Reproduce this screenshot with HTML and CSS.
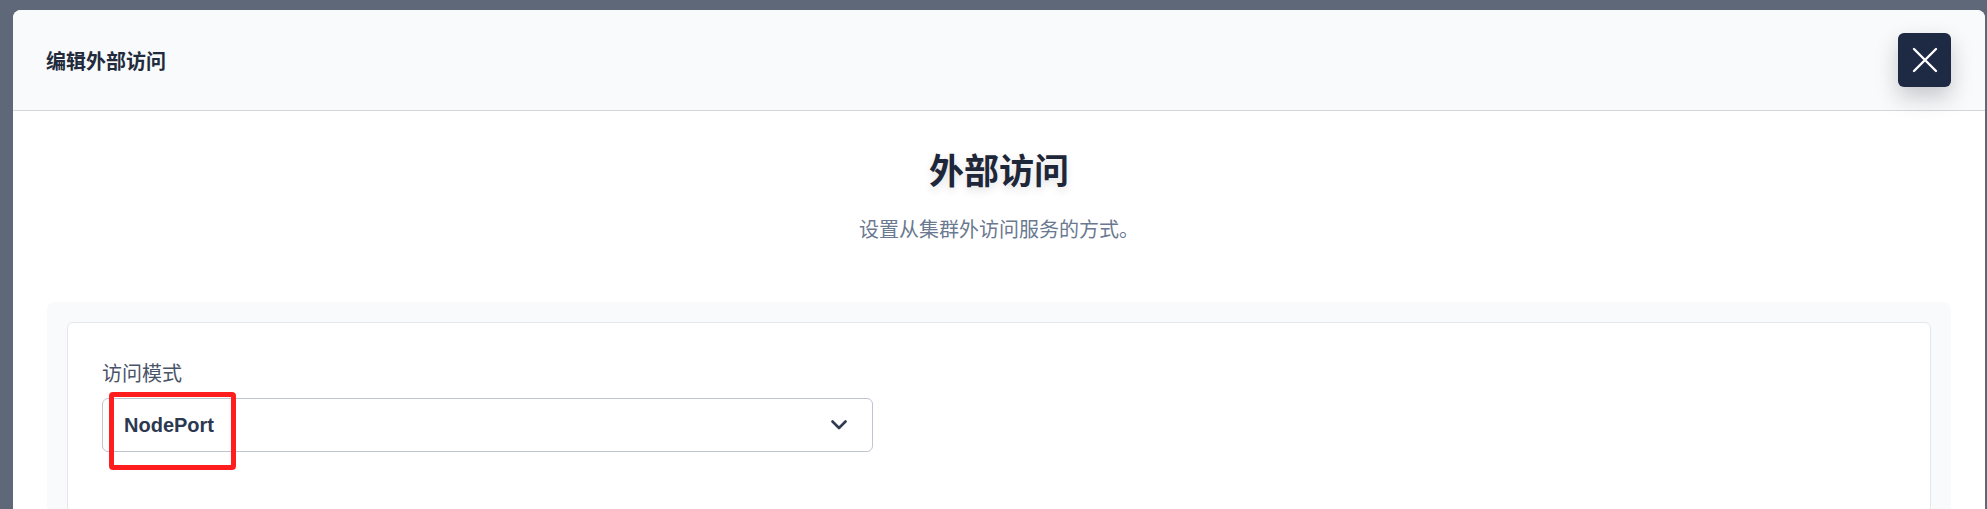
FILE: index.html
```html
<!DOCTYPE html>
<html lang="zh-CN">
<head>
<meta charset="utf-8">
<title>编辑外部访问</title>
<link rel="stylesheet" href="styles.css">
</head>
<body>
<div class="modal">
  <header class="modal-header">
    <h2 class="modal-title">编辑外部访问</h2>
    <button class="close-btn" aria-label="关闭">
      <svg width="26" height="26" viewBox="0 0 26 26"><path d="M2 2 L24 24 M24 2 L2 24" stroke="#fff" stroke-width="2.4" stroke-linecap="round" fill="none"/></svg>
    </button>
  </header>
  <div class="modal-body">
    <h1 class="section-heading">外部访问</h1>
    <p class="section-desc">设置从集群外访问服务的方式。</p>
    <div class="panel">
      <div class="card">
        <label class="field-label">访问模式</label>
        <div class="select-wrap">
          <div class="select">
            <span class="select-value">NodePort</span>
            <svg class="chevron" width="16" height="10" viewBox="0 0 16 10"><path d="M1.5 1.5 L8 8 L14.5 1.5" stroke="#2f3b52" stroke-width="2.6" stroke-linecap="round" stroke-linejoin="round" fill="none"/></svg>
          </div>
          <div class="annotation"></div>
        </div>
      </div>
    </div>
  </div>
</div>
</body>
</html>
```

FILE: styles.css
```css
html, body {
  margin: 0;
  padding: 0;
}
body {
  width: 1987px;
  height: 509px;
  overflow: hidden;
  background: #5f6879;
  font-family: "Liberation Sans", "Noto Sans CJK SC", sans-serif;
}
.modal {
  margin: 10px 2px 0 13px;
  height: 520px;
  background: #ffffff;
  border-radius: 8px 8px 0 0;
  overflow: hidden;
}
.modal-header {
  display: flex;
  align-items: center;
  justify-content: space-between;
  height: 100px;
  padding: 0 34px 0 33px;
  background: #f9fafb;
  border-bottom: 1px solid #d3d7de;
}
.modal-title {
  margin: 0;
  font-size: 20px;
  font-weight: 700;
  color: #222b3c;
  font-family: "Noto Sans CJK SC", sans-serif;
}
.close-btn {
  width: 53px;
  height: 54px;
  border: none;
  border-radius: 6px;
  background: #1e2943;
  box-shadow: 0 10px 22px rgba(15, 23, 42, 0.22);
  display: flex;
  align-items: center;
  justify-content: center;
  padding: 0;
}
.modal-body {
  padding-top: 34px;
  text-align: center;
}
.section-heading {
  margin: 0;
  font-family: "Noto Sans CJK SC", sans-serif;
  font-size: 35px;
  line-height: 48px;
  font-weight: 700;
  color: #1e2739;
  text-shadow: 0 4px 8px rgba(0, 0, 0, 0.12);
}
.section-desc {
  margin: 22px 0 0;
  font-family: "Noto Sans CJK SC", sans-serif;
  font-size: 20px;
  line-height: 28px;
  color: #6a7990;
}
.panel {
  margin: 59px 34px 0;
  padding: 20px;
  background: #f9fafb;
  border-radius: 8px;
  text-align: left;
}
.card {
  background: #ffffff;
  border: 1px solid #e4e7ec;
  border-radius: 6px;
  padding: 36px 34px 60px;
  display: flex;
  flex-direction: column;
  align-items: flex-start;
}
.field-label {
  font-family: "Noto Sans CJK SC", sans-serif;
  font-size: 20px;
  line-height: 28px;
  color: #4a5468;
  margin-bottom: 11px;
}
.select-wrap {
  position: relative;
}
.select {
  box-sizing: border-box;
  width: 771px;
  height: 54px;
  border: 1px solid #bfc5cf;
  border-radius: 6px;
  display: flex;
  align-items: center;
  justify-content: space-between;
  padding: 0 25px 0 21px;
}
.select-value {
  font-family: "Liberation Sans", sans-serif;
  font-weight: 700;
  font-size: 20px;
  color: #2c3850;
}
.annotation {
  position: absolute;
  left: 7px;
  top: -6px;
  width: 127px;
  height: 78px;
  box-sizing: border-box;
  border: 5px solid #ff1d1d;
  border-radius: 4px;
}
```
